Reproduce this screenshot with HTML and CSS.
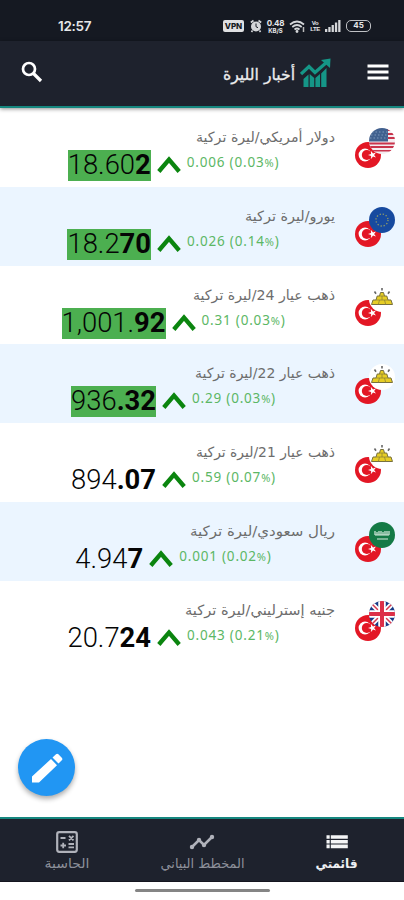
FILE: index.html
```
<!DOCTYPE html>
<html lang="ar">
<head>
<meta charset="utf-8">
<title>أخبار الليرة</title>
<link rel="stylesheet" href="styles.css">
</head>
<body>
<svg width="0" height="0" class="defs">
  <defs>
    <clipPath id="disc"><circle cx="13" cy="13" r="13"/></clipPath>
    <symbol id="tr" viewBox="0 0 26 26">
      <circle cx="13" cy="13" r="13" fill="#e31725"/>
      <circle cx="10" cy="13" r="6.4" fill="#fff"/><circle cx="11.8" cy="13" r="5" fill="#e31725"/>
      <path d="M13 13l3-1 .1-3 1.9 2.500 3-.9-1.900 2.400 1.900 2.500-3-.9-1.900 2.400v-3z" fill="#fff"/>
    </symbol>
    <symbol id="us" viewBox="0 0 26 26"><g clip-path="url(#disc)">
      <path fill="#f4edf1" d="M0 0h26v26H0z"/>
      <path fill="#c9344c" d="M14 1h12v2H14zM14 5h12v2H14zM14 9h12v2H14zM0 14.500h26v2H0zM0 18h26v2H0zM0 22h26v1.500H0z"/>
      <path fill="#41618f" d="M0 0h19v13.500H0z"/>
      <path stroke="#7f9abc" stroke-dasharray="1.500 2" d="M3 4h16M2 7h17M1 10h18"/>
    </g></symbol>
    <symbol id="eu" viewBox="0 0 26 26">
      <circle cx="13" cy="13" r="13" fill="#174a9f"/>
      <circle cx="13" cy="13" r="6" fill="none" stroke="#8f9b69" stroke-width="1.300" stroke-dasharray="1.300 1.840"/>
    </symbol>
    <symbol id="gold" viewBox="0 0 26 26">
      <circle cx="13" cy="13" r="13" fill="#fff"/>
      <path d="M2.500 18.500l1.500-4.500h3l1.200-4h2.300l1-3.500h3l1 3.500h2.300l1.200 4h3l1.500 4.500z" fill="#e6cd25" stroke="#77703f" stroke-width="1"/>
      <path d="M7 14h12M10 10h6M9.300 18.500l1.200-4.500M16.700 18.500L15.500 14M13 10v4" stroke="#8f8436" stroke-width=".8"/>
      <path d="M13 2v2.500M5.500 5.500l1.500 2.300M20.500 5.500L19 7.800" stroke="#666" stroke-width="1.600"/>
    </symbol>
    <symbol id="sa" viewBox="0 0 26 26">
      <circle cx="13" cy="13" r="13" fill="#147a46"/>
      <path d="M6 9v4M8 10v3h2v-4M12 9v4h2v-3M16 9v4h2v-4M20 9v4M6 13h14" stroke="#d7ebdf" stroke-width="1.200" fill="none"/>
      <path d="M8 17h11" stroke="#b8dac7" stroke-width="1.200"/>
    </symbol>
    <symbol id="gb" viewBox="0 0 26 26"><g clip-path="url(#disc)">
      <path fill="#173a86" d="M0 0h26v26H0z"/>
      <path d="M0 0l26 26M26 0L0 26" stroke="#fff" stroke-width="5"/>
      <path d="M0 0l26 26M26 0L0 26" stroke="#d63b50" stroke-width="1.500"/>
      <path d="M13 0v26M0 13h26" stroke="#fff" stroke-width="7.500"/>
      <path d="M13 0v26M0 13h26" stroke="#dc3048" stroke-width="4"/>
    </g></symbol>
    <symbol id="up" viewBox="0 0 24 18"><path d="M1.800 15.500L12 3.500l10.200 12" fill="none" stroke="#0b850f" stroke-width="4.300"/></symbol>
  </defs>
</svg>

<div class="status">
  <span class="clock">12:57</span>
  <div class="status-icons">
    <span class="vpn">VPN</span>
    <svg width="12" height="14" viewBox="0 0 12 14"><circle cx="6" cy="7.500" r="5" fill="#d5d7da"/><path d="M.8 3.500l2.700-2M11.200 3.500l-2.700-2M2.500 11.500l-1 1.500M9.500 11.500l1 1.500" stroke="#d5d7da" stroke-width="1.600"/><path d="M6 4.500v3.200l2 1" stroke="#151922" fill="none"/></svg>
    <span class="speed"><b>0.48</b><i>KB/S</i></span>
    <svg width="17" height="13" viewBox="0 0 17 13"><g fill="none" stroke="#d5d7da" stroke-width="1.700"><path d="M1 4.500q7-6 14 0M3.300 7q4.700-4 9.400 0M5.500 9.500q2.500-2 5 0"/></g><circle cx="8" cy="11.500" r="1.400" fill="#d5d7da"/><path d="M14.500 7v5" stroke="#bbb" stroke-width="1.500"/></svg>
    <span class="volte"><b>Vo</b><b>LTE</b></span>
    <svg width="16" height="12" viewBox="0 0 16 12"><path fill="#d5d7da" d="M0 9h2.300v3H0zM3.300 7h2.300v5H3.300zM6.600 5h2.300v7H6.600zM9.900 2.500h2.300V12H9.900zM13.200 0h2.300v12h-2.300z"/></svg>
    <span class="battery">45</span>
  </div>
</div>

<header class="bar">
  <svg class="search" width="22" height="22" viewBox="0 0 22 22"><circle cx="8" cy="8" r="6" fill="none" stroke="#fff" stroke-width="2.700"/><path d="M12.500 12.500l7.500 7.500" stroke="#fff" stroke-width="3.200"/></svg>
  <div class="brand">
    <svg width="74" height="28" viewBox="0 0 74 28"><text class="title" x="73" y="21" textLength="72" lengthAdjust="spacingAndGlyphs">أخبار الليرة</text></svg>
    <svg width="32" height="30" viewBox="0 0 32 30"><g fill="#159687"><path d="M3.500 21l5-4.500V29h-5zM9.700 16l4.500 4v9H9.700zM15.400 20l4.600-4v13h-4.600zM21.200 15.500l5.300-5.500v19h-5.300z"/><path d="M21 2l9.500-1.500L30 10z"/></g><path d="M1 16l8-7.500 6 6L27 4" stroke="#159687" stroke-width="3.300" fill="none"/></svg>
  </div>
  <svg class="menu" width="22" height="16" viewBox="0 0 22 16"><path d="M.5 2h21M.5 8h21M.5 14h21" stroke="#fff" stroke-width="3"/></svg>
</header>

<main class="list">
  <section class="row">
    <div class="info"><svg class="name" viewBox="0 0 200 26"><text x="200" y="18" textLength="139" lengthAdjust="spacingAndGlyphs">دولار أمريكي/ليرة تركية</text></svg>
      <div class="quote"><span class="price hit">18.60<b>2</b></span><svg class="up"><use href="#up"/></svg><span class="change">0.006 (0.03<small>%</small>)</span></div></div>
    <div class="flags"><svg class="base"><use href="#tr"/></svg><svg class="top"><use href="#us"/></svg></div>
  </section>
  <section class="row">
    <div class="info"><svg class="name" viewBox="0 0 200 26"><text x="200" y="18" textLength="90" lengthAdjust="spacingAndGlyphs">يورو/ليرة تركية</text></svg>
      <div class="quote"><span class="price hit">18.2<b>70</b></span><svg class="up"><use href="#up"/></svg><span class="change">0.026 (0.14<small>%</small>)</span></div></div>
    <div class="flags"><svg class="base"><use href="#tr"/></svg><svg class="top"><use href="#eu"/></svg></div>
  </section>
  <section class="row">
    <div class="info"><svg class="name" viewBox="0 0 200 26"><text x="200" y="18" textLength="142" lengthAdjust="spacingAndGlyphs">ذهب عيار 24/ليرة تركية</text></svg>
      <div class="quote"><span class="price hit">1,001.<b>92</b></span><svg class="up"><use href="#up"/></svg><span class="change">0.31 (0.03<small>%</small>)</span></div></div>
    <div class="flags"><svg class="base"><use href="#tr"/></svg><svg class="top"><use href="#gold"/></svg></div>
  </section>
  <section class="row">
    <div class="info"><svg class="name" viewBox="0 0 200 26"><text x="200" y="18" textLength="140" lengthAdjust="spacingAndGlyphs">ذهب عيار 22/ليرة تركية</text></svg>
      <div class="quote"><span class="price hit">936<b>.32</b></span><svg class="up"><use href="#up"/></svg><span class="change">0.29 (0.03<small>%</small>)</span></div></div>
    <div class="flags"><svg class="base"><use href="#tr"/></svg><svg class="top"><use href="#gold"/></svg></div>
  </section>
  <section class="row">
    <div class="info"><svg class="name" viewBox="0 0 200 26"><text x="200" y="18" textLength="139" lengthAdjust="spacingAndGlyphs">ذهب عيار 21/ليرة تركية</text></svg>
      <div class="quote"><span class="price">894<b>.07</b></span><svg class="up"><use href="#up"/></svg><span class="change">0.59 (0.07<small>%</small>)</span></div></div>
    <div class="flags"><svg class="base"><use href="#tr"/></svg><svg class="top"><use href="#gold"/></svg></div>
  </section>
  <section class="row">
    <div class="info"><svg class="name" viewBox="0 0 200 26"><text x="200" y="18" textLength="145" lengthAdjust="spacingAndGlyphs">ريال سعودي/ليرة تركية</text></svg>
      <div class="quote"><span class="price">4.94<b>7</b></span><svg class="up"><use href="#up"/></svg><span class="change">0.001 (0.02<small>%</small>)</span></div></div>
    <div class="flags"><svg class="base"><use href="#tr"/></svg><svg class="top"><use href="#sa"/></svg></div>
  </section>
  <section class="row">
    <div class="info"><svg class="name" viewBox="0 0 200 26"><text x="200" y="18" textLength="150" lengthAdjust="spacingAndGlyphs">جنيه إسترليني/ليرة تركية</text></svg>
      <div class="quote"><span class="price">20.7<b>24</b></span><svg class="up"><use href="#up"/></svg><span class="change">0.043 (0.21<small>%</small>)</span></div></div>
    <div class="flags"><svg class="base"><use href="#tr"/></svg><svg class="top"><use href="#gb"/></svg></div>
  </section>
</main>

<div class="fab"><svg width="34" height="34" viewBox="0 0 34 34"><path fill="#fff" d="M2 25.500L21 8l6 6.200L9 31.500H2zM22.500 6.500L26 3.200q1.200-1 2.400 0l3.400 3.500q1.200 1.400 0 2.600l-3.300 3.200z"/></svg></div>

<nav class="tabs">
  <div class="tab">
    <svg class="icon" width="22" height="22" viewBox="0 0 22 22"><rect x="1.200" y="1.200" width="19.600" height="19.600" rx="2" fill="none" stroke="#b0b2ba" stroke-width="2.200"/><path d="M4.500 7h5M4.500 14.500h5.500M7.200 11.800v5.500M12.500 13h5.500M12.500 16.300h5.500M13 4.800l4.500 4.500M17.500 4.800L13 9.300" stroke="#b0b2ba" stroke-width="1.800"/></svg>
    <svg class="label" viewBox="0 0 100 24"><text x="72.500" y="15" textLength="45" lengthAdjust="spacingAndGlyphs">الحاسبة</text></svg>
  </div>
  <div class="tab">
    <svg class="icon" width="26" height="22" viewBox="0 0 26 22"><path d="M3 16l7-7 5 5 8-8" fill="none" stroke="#b0b2ba" stroke-width="2.600"/><g fill="#b0b2ba"><circle cx="3" cy="16" r="2.200"/><circle cx="10" cy="9" r="2.200"/><circle cx="15" cy="14" r="2.200"/><circle cx="23" cy="6" r="2.200"/></g></svg>
    <svg class="label" viewBox="0 0 100 24"><text x="92.500" y="15" textLength="84" lengthAdjust="spacingAndGlyphs">المخطط البياني</text></svg>
  </div>
  <div class="tab on">
    <svg class="icon" width="22" height="22" viewBox="0 0 22 22"><path d="M.5 6h3.200M.5 10.700h3.200M.5 15.400h3.200M4.800 6h17M4.800 10.700h17M4.800 15.400h17" stroke="#f4f5f6" stroke-width="3.600"/></svg>
    <svg class="label" viewBox="0 0 100 24"><text x="70.500" y="15" textLength="42" lengthAdjust="spacingAndGlyphs">قائمتي</text></svg>
  </div>
</nav>
<div class="gesture"><i></i></div>
</body>
</html>
```
FILE: styles.css
```
* { box-sizing: border-box; }
body {
  margin: 0;
  width: 404px;
  height: 900px;
  display: flex;
  flex-direction: column;
  overflow: hidden;
  background: #fff;
  position: relative;
  font-family: "DejaVu Sans", sans-serif;
}
svg { display: block; flex: none; }
.defs { position: absolute; }

.status {
  height: 41px;
  flex: none;
  background: #151922;
  color: #e6e7e9;
  display: flex;
  justify-content: space-between;
  align-items: center;
  padding: 11px 33px 0 58px;
}
.clock { font: 600 13.5px Inter, sans-serif; letter-spacing: -.3px; }
.status-icons { display: flex; align-items: center; height: 14px; }
.vpn {
  width: 21px; height: 12px; border-radius: 2px; background: #dfe0e2; color: #151922;
  font: 800 8px/12px Inter, sans-serif; text-align: center; margin-right: 6px;
}
.speed { width: 19px; margin: 0 4px 0 4px; text-align: center; display: flex; flex-direction: column; }
.speed b { font: 700 8px/8px Inter, sans-serif; letter-spacing: -.2px; }
.speed i { font: 700 6px/7px Inter, sans-serif; }
.volte { width: 10px; margin: 0 5px 0 4px; display: flex; flex-direction: column; align-items: center; }
.volte b { font: 700 6px/6px "Liberation Sans", sans-serif; letter-spacing: -.4px; }
.battery {
  width: 25px; height: 12px; margin-left: 5px; border: 1.500px solid #bfc1c5; border-radius: 5px;
  font: 700 8px/9px Inter, sans-serif; text-align: center;
}

.bar {
  height: 67px;
  flex: none;
  background: #1e222d;
  border-bottom: 2px solid #15877f;
  box-shadow: 0 1px 4px rgba(0,0,0,.45);
  display: flex;
  align-items: center;
  padding: 0 15px 4px 21px;
  z-index: 1;
}
.brand { display: flex; align-items: center; margin-left: auto; margin-right: 35px; gap: 4px; padding-top: 2px; }
.title { font-size: 16px; fill: #eceded; stroke: #eceded; stroke-width: .3px; direction: rtl; }
.menu { margin-top: 1px; }

.list { flex: 1; }
.row { height: 78.750px; display: flex; }
.row:nth-child(even) { background: #ebf5ff; }
.info { width: 347px; display: flex; flex-direction: column; }
.name { width: 200px; height: 26px; margin: 16px 0 0 135px; overflow: visible; }
.name text { font-size: 14px; fill: #6d6d6d; direction: rtl; }
.quote { display: flex; justify-content: center; height: 31px; }
.price { font: 300 27.4px/31px Roboto, sans-serif; height: 31px; color: #050505; white-space: nowrap; }
.price b { font-weight: 700; }
.hit { background: #4caf50; }
.up { width: 24px; height: 18px; margin: 6px 6px 0; }
.change { font: 400 13.5px/25px "Noto Sans", sans-serif; letter-spacing: .8px; color: #5cb765; white-space: nowrap; }
.change small { font-size: 11px; }
.flags { position: relative; width: 57px; }
.flags svg { position: absolute; width: 26px; height: 26px; }
.base { left: 8px; top: 34px; }
.top { left: 22px; top: 20px; }

.fab {
  position: absolute; left: 18px; top: 739px; width: 57px; height: 57px;
  border-radius: 50%; background: #2196f3;
  display: flex; align-items: center; justify-content: center;
  box-shadow: 0 3px 5px rgba(0,0,0,.32);
}

.tabs {
  height: 65px;
  flex: none;
  background: #1e222d;
  border-top: 2px solid #15877f;
  border-bottom: 1px solid #15151f;
  display: flex;
}
.tab { flex: 1; display: flex; flex-direction: column; align-items: center; padding-top: 12px; }
.label { width: 100px; height: 24px; }
.label text { font-size: 13px; fill: #8d909a; direction: rtl; }
.on .label text { fill: #eef0f2; font-weight: 700; }
.gesture { height: 18px; flex: none; display: flex; justify-content: center; padding-top: 7px; }
.gesture i { width: 135px; height: 3px; border-radius: 2px; background: #858585; }
```
